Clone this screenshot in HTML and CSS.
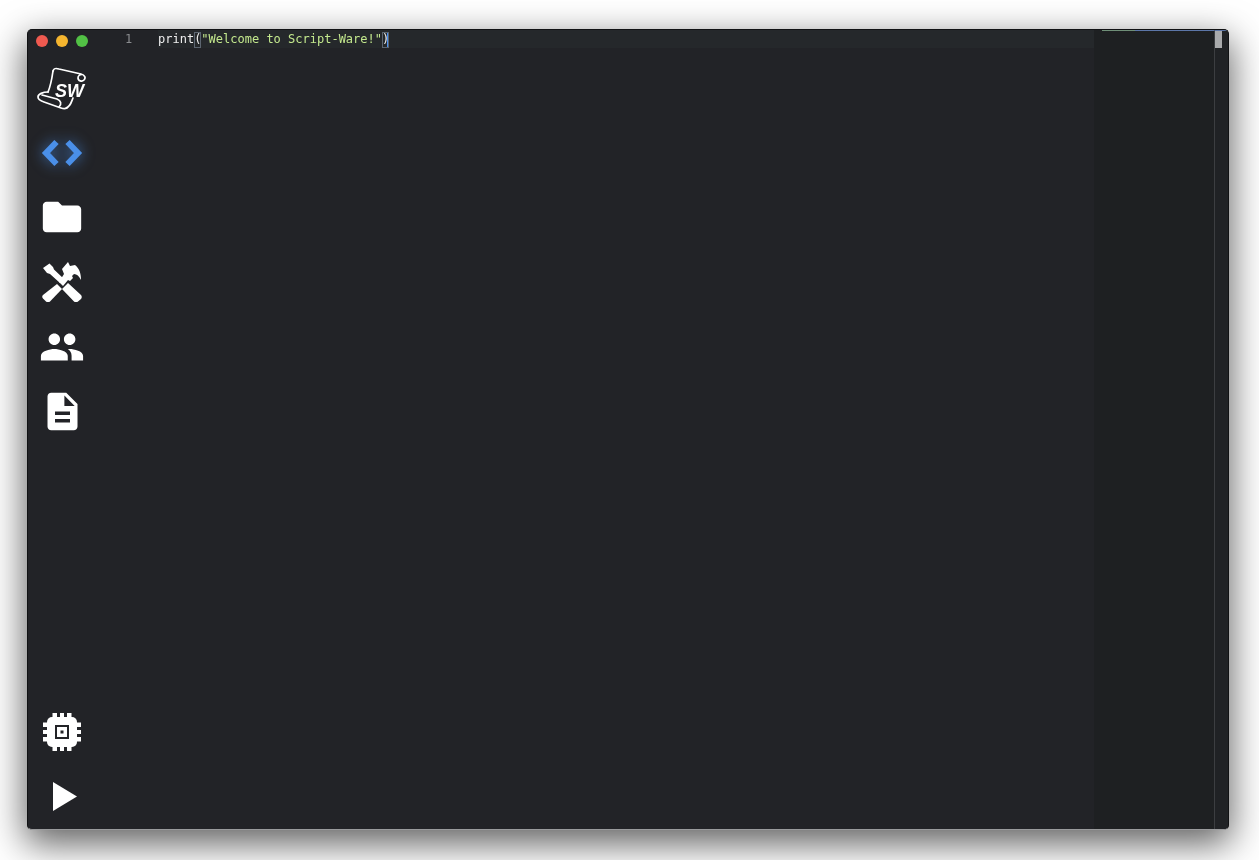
FILE: index.html
```html
<!DOCTYPE html>
<html lang="en">
<head>
<meta charset="utf-8">
<title>Script-Ware</title>
<link rel="stylesheet" href="styles.css">
</head>
<body>
<main class="window">
  <nav class="rail">
    <div class="lights"><span class="dot red"></span><span class="dot yellow"></span><span class="dot green"></span></div>
    <a class="item">
      <svg viewBox="0 0 50 44" width="50" height="44">
        <g fill="none" stroke="#fff" stroke-width="1.700" stroke-linejoin="round" stroke-linecap="round">
          <path d="M16 4 C15 11 14 18 11 25"/>
          <path d="M16 4 C17 1 19 1 22 2 L44 7 C48 8 49 11 47 13 C45 15 41 14 41 11 C41 9 43 7.500 45 7.500"/>
          <path d="M36 31 C34 36 33 40 29 41"/>
          <path d="M11 25 C6 25 1 27 1 30 C1 33 4 34 7 35 L24 41 C27 42 29 41.500 30 41"/>
          <path d="M5 28 L20 32 C24 33.500 25 37 22 40"/>
        </g>
        <text class="logo-text" x="18" y="30">SW</text>
      </svg>
    </a>
    <a class="item">
      <svg class="code-icon" viewBox="0 0 44 28" width="44" height="28">
        <path d="M16.500 3 L6 14 L16.500 25" fill="none" stroke="#4a8fe8" stroke-width="6"/>
        <path d="M27.500 3 L38 14 L27.500 25" fill="none" stroke="#4a8fe8" stroke-width="6"/>
      </svg>
    </a>
    <a class="item">
      <svg viewBox="0 0 24 24" width="46" height="46"><path fill="#fff" d="M10 4H4c-1.100 0-2 .9-2 2v12c0 1.100.9 2 2 2h16c1.100 0 2-.9 2-2V8c0-1.100-.9-2-2-2h-8l-2-2z"/></svg>
    </a>
    <a class="item">
      <svg viewBox="0 0 40 40" width="40" height="40">
        <g fill="#fff">
          <path d="M1 6 L7.500 1.500 L11 5 L12 7.500 L22 17 L18 21 L8 12 L5 11 Z"/>
          <path d="M26 21 L39 33 C40 34 40 36 39 37 L36 39.500 C35 40.500 33 40.500 32 39.500 L20 27 Z"/>
          <path d="M15 22 L20 27 L8 39.500 C7 40.500 5 40.500 4 39.500 L1 36.500 C0 35.500 0 34 1 33 Z"/>
          <path d="M17 20 L22 12 L20 7 L26 0 L28 4 L33 3 C37 6 39 11 39 18 C37 14 35 12 32 12 L30 14 L31 16 L28 19 L26 18 L21 24 Z"/>
        </g>
      </svg>
    </a>
    <a class="item">
      <svg class="nudge" viewBox="0 0 24 24" width="46" height="46"><path fill="#fff" d="M16 11c1.660 0 2.990-1.340 2.990-3S17.660 5 16 5c-1.660 0-3 1.340-3 3s1.340 3 3 3zm-8 0c1.660 0 2.990-1.340 2.990-3S9.660 5 8 5C6.340 5 5 6.340 5 8s1.340 3 3 3zm0 2c-2.330 0-7 1.170-7 3.500V19h14v-2.500c0-2.330-4.670-3.500-7-3.500zm8 0c-.29 0-.62.02-.97.05 1.160.84 1.970 1.970 1.970 3.450V19h6v-2.500c0-2.330-4.670-3.500-7-3.500z"/></svg>
    </a>
    <a class="item">
      <svg class="nudge" viewBox="0 0 24 24" width="45" height="45"><path fill="#fff" fill-rule="evenodd" d="M14 2H6c-1.100 0-1.990.9-1.990 2L4 20c0 1.100.89 2 1.990 2H18c1.100 0 2-.9 2-2V8l-6-6zm2 15.800H8v-1.800h8v1.800zm0-4H8v-1.800h8v1.800zm-3-4.800V3.500L18.500 9H13z"/></svg>
    </a>
    <div class="spacer"></div>
    <a class="item">
      <svg viewBox="0 0 38 38" width="38" height="38">
        <g fill="#fff">
          <rect x="4" y="4" width="30" height="30" rx="5"/>
          <path d="M9.500 0h4.500v6H9.500zM17 0h4v6h-4zM24 0h4.500v6H24zM9.500 32h4.500v6H9.500zM17 32h4v6h-4zM24 32h4.500v6H24zM0 9.500h6v4.500H0zM0 17h6v4H0zM0 24h6v4.500H0zM32 9.500h6v4.500h-6zM32 17h6v4h-6zM32 24h6v4.500h-6z"/>
        </g>
        <path class="chip-cut" fill-rule="evenodd" d="M12 12h14v14H12zM14 14v10h10V14z"/>
        <rect class="chip-cut" x="17.500" y="17.500" width="3" height="3"/>
      </svg>
    </a>
    <a class="item">
      <svg class="play" viewBox="0 0 24 29" width="24" height="29"><path fill="#fff" d="M0 0 L24 14.500 L0 29 Z"/></svg>
    </a>
  </nav>
  <section class="editor">
    <div class="lines">
      <div class="line">
        <span class="num">1</span>
        <code class="code"><span class="fn">print</span><span class="bracket">(</span><span class="str">"Welcome to Script-Ware!"</span><span class="bracket cursor">)</span></code>
      </div>
    </div>
    <aside class="minimap">
      <div class="mini-strip"><div class="mini-mark"></div></div>
    </aside>
    <div class="scrollbar"><div class="thumb"></div></div>
  </section>
</main>
</body>
</html>
```

FILE: styles.css
```css
* { box-sizing: border-box; }
html, body { height: 100%; }
body {
  margin: 0;
  padding: 29px 30px 30px 27px;
  background: #fff;
  overflow: hidden;
}
.window {
  display: flex;
  height: 801px;
  background: #222327;
  border: 1px solid #111214;
  border-bottom-color: #9a9b9d;
  border-radius: 5px;
  box-shadow: 0 12px 36px 2px rgba(0, 0, 0, .62);
  overflow: hidden;
}
.rail {
  display: flex;
  flex-direction: column;
  flex: none;
  width: 68px;
  padding-bottom: 1px;
  filter: blur(.35px);
}
.lights {
  display: flex;
  flex: none;
  gap: 8px;
  height: 27px;
  padding: 5px 0 0 8px;
}
.dot { width: 12px; height: 12px; border-radius: 50%; }
.red { background: #f05a50; }
.yellow { background: #f5b52f; }
.green { background: #52c145; }
.item {
  display: flex;
  flex: none;
  align-items: center;
  justify-content: center;
  height: 64.2px;
}
.spacer { flex: 1; }
.logo-text {
  fill: #fff;
  font: italic 700 18px "Liberation Sans", sans-serif;
}
.code-icon { filter: drop-shadow(0 0 7px rgba(74, 143, 232, .75)); }
.nudge { margin-top: 2px; }
.chip-cut { fill: #222327; }
.play { margin: 2px 0 0 6px; }
.editor { display: flex; flex: 1; min-width: 0; }
.lines { flex: 1; min-width: 0; filter: blur(.3px); }
.line {
  display: flex;
  align-items: center;
  height: 18px;
  background: #25282b;
  font: 12px/18px "DejaVu Sans Mono", monospace;
}
.num {
  flex: none;
  width: 62px;
  height: 18px;
  padding-left: 29px;
  color: #8a8c8f;
  background: #222327;
}
.code { font: inherit; color: #eeeeee; }
.str { color: #c3e88d; }
.bracket {
  display: inline-block;
  height: 16px;
  line-height: 15px;
  box-shadow: inset 0 0 0 1px #5c6570;
}
.cursor { box-shadow: inset 0 0 0 1px #5c6570, inset -2px 0 0 #4a90f0; }
.minimap {
  flex: none;
  width: 120px;
  padding-left: 8px;
  background: #1e2022;
}
.mini-strip { height: 1px; background: #5c76a8; }
.mini-mark { width: 33px; height: 1px; background: #6f8f78; }
.scrollbar {
  flex: none;
  width: 14px;
  background: #202225;
  border-left: 1px solid #3c3e41;
  border-top: 1px solid #5c76a8;
}
.thumb { width: 7px; height: 17px; background: #a9aaac; }
```
